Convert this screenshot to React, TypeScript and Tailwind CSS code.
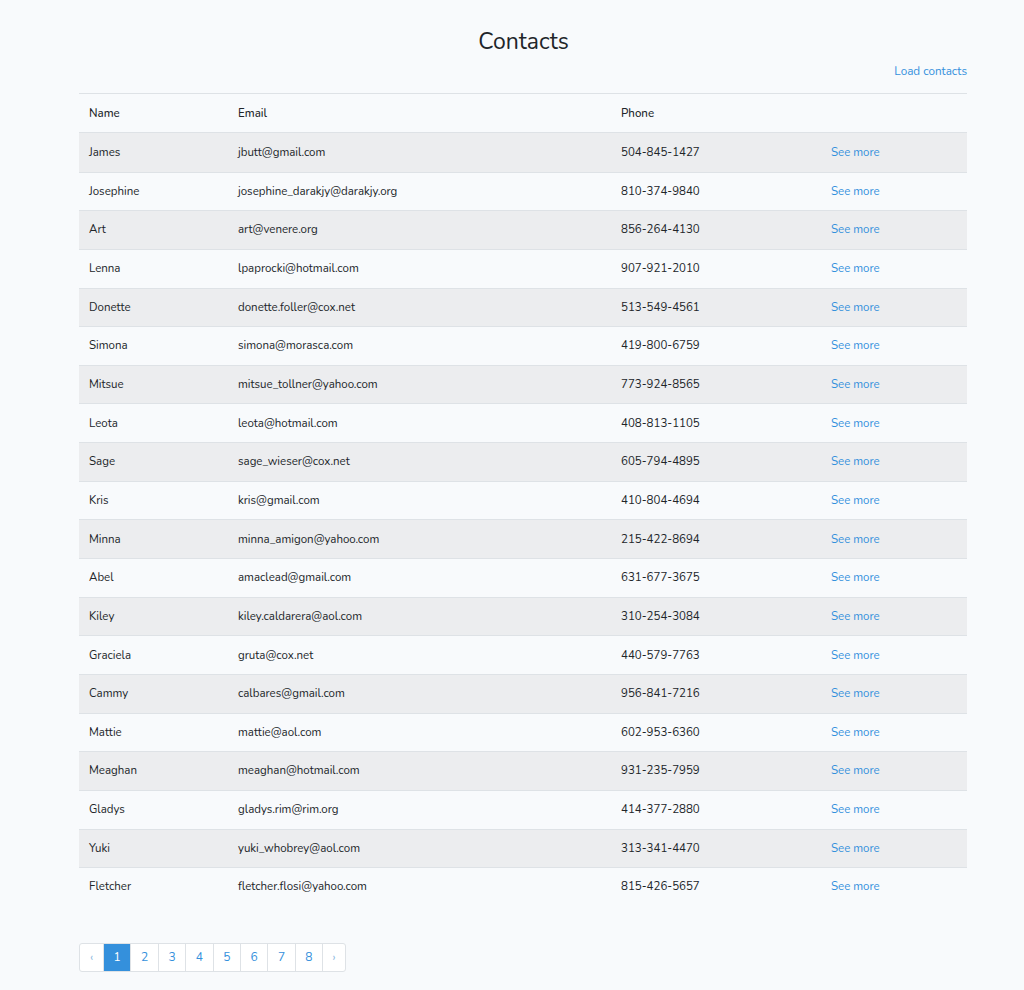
import React from "react";

const rows: [string, string, string][] = [
  ["James", "jbutt@gmail.com", "504-845-1427"],
  ["Josephine", "josephine_darakjy@darakjy.org", "810-374-9840"],
  ["Art", "art@venere.org", "856-264-4130"],
  ["Lenna", "lpaprocki@hotmail.com", "907-921-2010"],
  ["Donette", "donette.foller@cox.net", "513-549-4561"],
  ["Simona", "simona@morasca.com", "419-800-6759"],
  ["Mitsue", "mitsue_tollner@yahoo.com", "773-924-8565"],
  ["Leota", "leota@hotmail.com", "408-813-1105"],
  ["Sage", "sage_wieser@cox.net", "605-794-4895"],
  ["Kris", "kris@gmail.com", "410-804-4694"],
  ["Minna", "minna_amigon@yahoo.com", "215-422-8694"],
  ["Abel", "amaclead@gmail.com", "631-677-3675"],
  ["Kiley", "kiley.caldarera@aol.com", "310-254-3084"],
  ["Graciela", "gruta@cox.net", "440-579-7763"],
  ["Cammy", "calbares@gmail.com", "956-841-7216"],
  ["Mattie", "mattie@aol.com", "602-953-6360"],
  ["Meaghan", "meaghan@hotmail.com", "931-235-7959"],
  ["Gladys", "gladys.rim@rim.org", "414-377-2880"],
  ["Yuki", "yuki_whobrey@aol.com", "313-341-4470"],
  ["Fletcher", "fletcher.flosi@yahoo.com", "815-426-5657"],
];

const pages = ["‹", "1", "2", "3", "4", "5", "6", "7", "8", "›"];

export default function App() {
  return (
    <div
      className="min-h-[990px] bg-[#f8fafc] text-[#212529]"
      style={{ fontFamily: "Nunito, Lato, 'Noto Sans', sans-serif" }}
    >
      <div className="w-[888px] ml-[79px] pt-[27px]">
        <h1 className="text-center text-[23px] leading-[29px] pl-[1px]">Contacts</h1>
        <div className="flex justify-end mt-[6px] h-[18px]">
          <a className="text-[11.7px] leading-[18px] text-[#3490dc]">Load contacts</a>
        </div>
        <div className="mt-[13px] text-[11.5px]">
          <div className="grid grid-cols-[149px_383px_210px_146px] h-[40px] pt-[1px] border-t border-b border-[#dee2e6] items-center font-medium">
            <div className="pl-[10px]">Name</div>
            <div className="pl-[10px]">Email</div>
            <div className="pl-[10px]">Phone</div>
            <div></div>
          </div>
          {rows.map((r, i) => (
            <div
              key={r[0]}
              className={`grid grid-cols-[149px_383px_210px_146px] h-[38.65px] items-center ${
                i > 0 ? "border-t border-[#dee2e6]" : ""
              } ${i % 2 === 0 ? "bg-[#ecedef]" : ""}`}
            >
              <div className="pl-[10px]">{r[0]}</div>
              <div className="pl-[10px]">{r[1]}</div>
              <div className="pl-[10px]">{r[2]}</div>
              <div className="pl-[10px] text-[#3490dc]">See more</div>
            </div>
          ))}
        </div>
        <div className="mt-[37px] flex">
          <div className="flex h-[29px] rounded-[3px] border border-[#dee2e6] bg-white overflow-hidden text-[12px]">
            {pages.map((p, i) => (
              <div
                key={i}
                className={`flex items-center justify-center ${
                  i === 0 || i === 9 ? "w-[23px]" : "w-[27.4px]"
                } ${i > 0 ? "border-l border-[#dee2e6]" : ""} ${
                  p === "1" ? "bg-[#3490dc] text-white border-[#3490dc]" : i === 0 || i === 9 ? "text-[#8bb8e0]" : "text-[#3490dc]"
                }`}
              >
                {p}
              </div>
            ))}
          </div>
        </div>
      </div>
    </div>
  );
}
